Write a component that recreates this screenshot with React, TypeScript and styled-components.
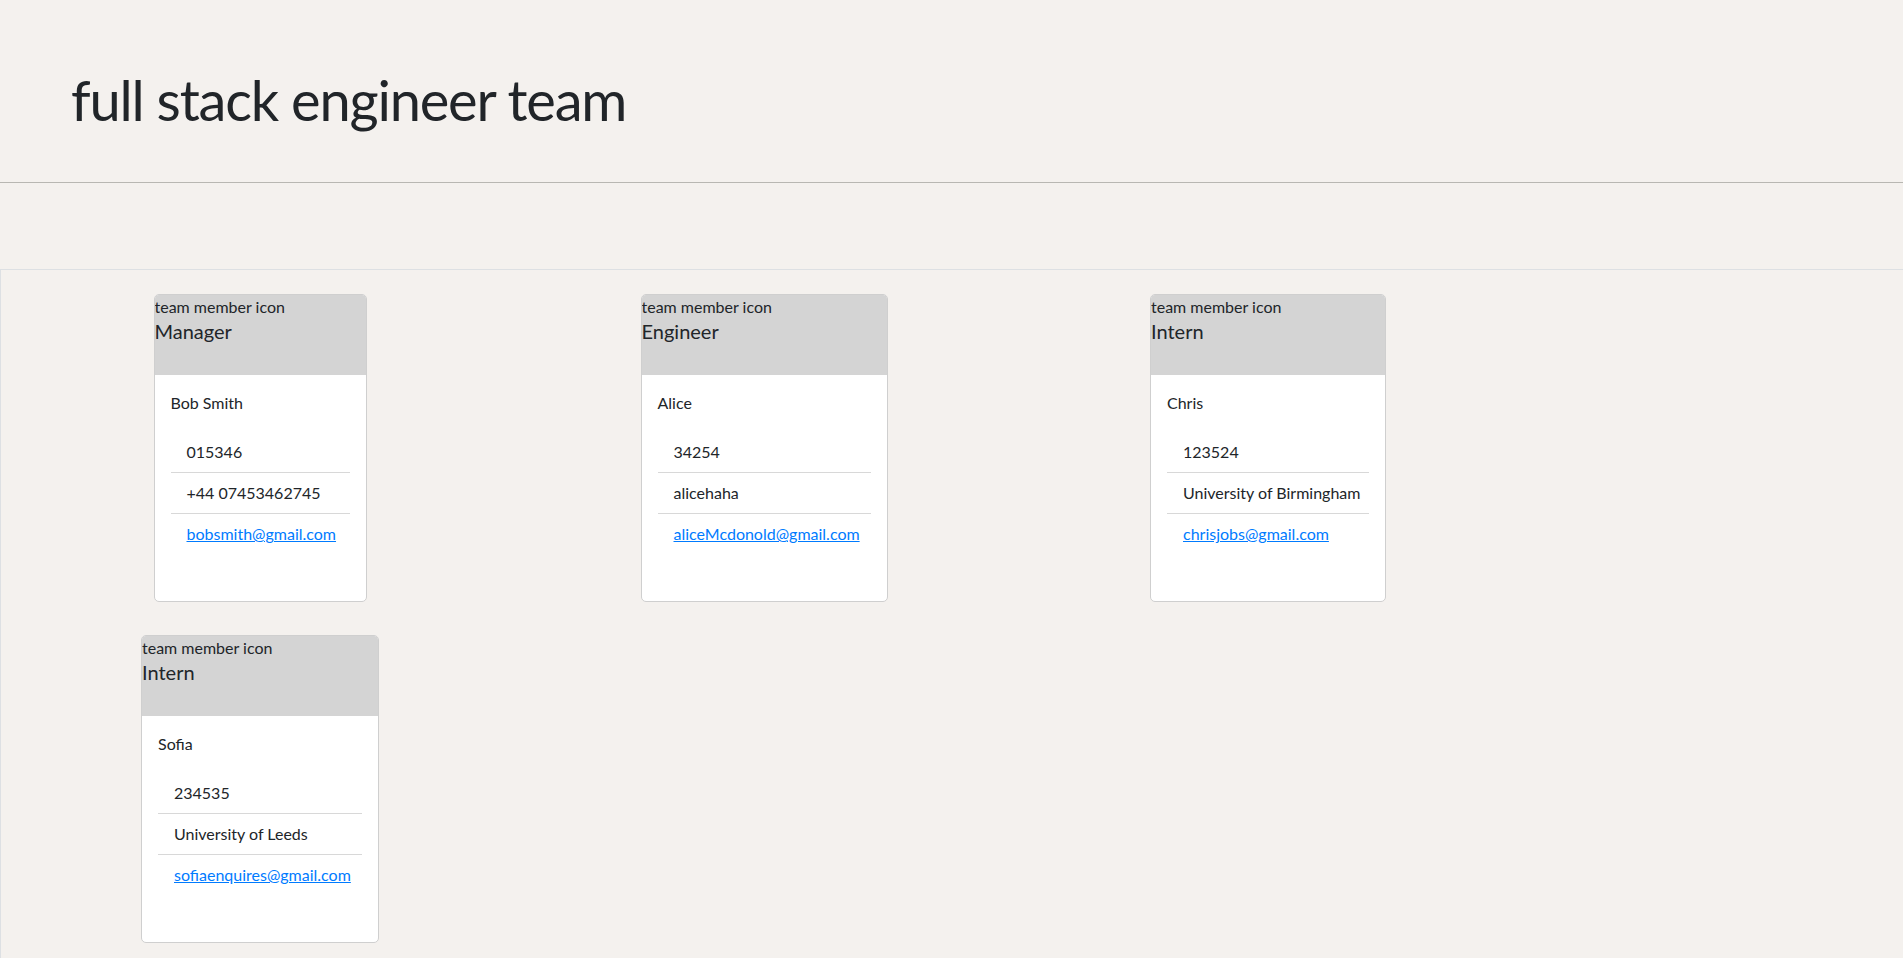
import React from "react";
import styled, { createGlobalStyle } from "styled-components";

const GlobalStyle = createGlobalStyle`
  html, body {
    margin: 0;
    padding: 0;
    background: #f4f1ee;
    color: #212529;
    font-family: "Lato", "Open Sans", sans-serif;
  }
  * { box-sizing: border-box; }
`;

const Header = styled.header`
  padding: 66px 0 49px 71px;
  border-bottom: 1px solid #b8b7b2;
`;

const Title = styled.h1`
  margin: 0;
  font-size: 56px;
  line-height: 67px;
  font-weight: 400;
  letter-spacing: -1.2px;
  color: #212529;
`;

const Board = styled.main`
  margin-top: 86px;
  border-top: 1px solid #dde0e3;
  border-left: 1px solid #dde0e3;
  padding: 24px 0 40px 7px;
  display: grid;
  grid-template-columns: repeat(3, 504px);
  row-gap: 33px;
  align-items: start;
`;

const Card = styled.article<{ $w: number }>`
  justify-self: center;
  width: ${(p) => p.$w}px;
  background: #ffffff;
  border: 1px solid #cfcfcf;
  border-radius: 5px;
  overflow: hidden;
`;

const CardHead = styled.div`
  height: 80px;
  background: #d4d4d4;
  color: #212529;
`;

const IconLabel = styled.div`
  font-size: 16px;
  line-height: 24px;
  white-space: nowrap;
`;

const Role = styled.div`
  font-size: 20px;
  line-height: 24px;
`;

const CardBody = styled.div`
  padding: 16px 16px 47px;
`;

const Name = styled.p`
  margin: 0 0 17px;
  font-size: 16px;
  line-height: 24px;
  white-space: nowrap;
`;

const List = styled.ul`
  list-style: none;
  margin: 0;
  padding: 0;
`;

const Item = styled.li`
  padding: 8px 16px;
  font-size: 16px;
  line-height: 24px;
  white-space: nowrap;
  border-bottom: 1px solid #d8d8d8;
  &:last-child {
    border-bottom: none;
  }
`;

const Mail = styled.a`
  color: #007bff;
  text-decoration: underline;
`;

type Member = {
  role: string;
  name: string;
  id: string;
  extra: string;
  email: string;
  width: number;
};

const team: Member[] = [
  { role: "Manager", name: "Bob Smith", id: "015346", extra: "+44 07453462745", email: "bobsmith@gmail.com", width: 213 },
  { role: "Engineer", name: "Alice", id: "34254", extra: "alicehaha", email: "aliceMcdonold@gmail.com", width: 247 },
  { role: "Intern", name: "Chris", id: "123524", extra: "University of Birmingham", email: "chrisjobs@gmail.com", width: 236 },
  { role: "Intern", name: "Sofia", id: "234535", extra: "University of Leeds", email: "sofiaenquires@gmail.com", width: 238 },
];

export default function App() {
  return (
    <>
      <GlobalStyle />
      <Header>
        <Title>full stack engineer team</Title>
      </Header>
      <Board>
        {team.map((m) => (
          <Card key={m.email} $w={m.width}>
            <CardHead>
              <IconLabel>team member icon</IconLabel>
              <Role>{m.role}</Role>
            </CardHead>
            <CardBody>
              <Name>{m.name}</Name>
              <List>
                <Item>{m.id}</Item>
                <Item>{m.extra}</Item>
                <Item>
                  <Mail href={`mailto:${m.email}`}>{m.email}</Mail>
                </Item>
              </List>
            </CardBody>
          </Card>
        ))}
      </Board>
    </>
  );
}
